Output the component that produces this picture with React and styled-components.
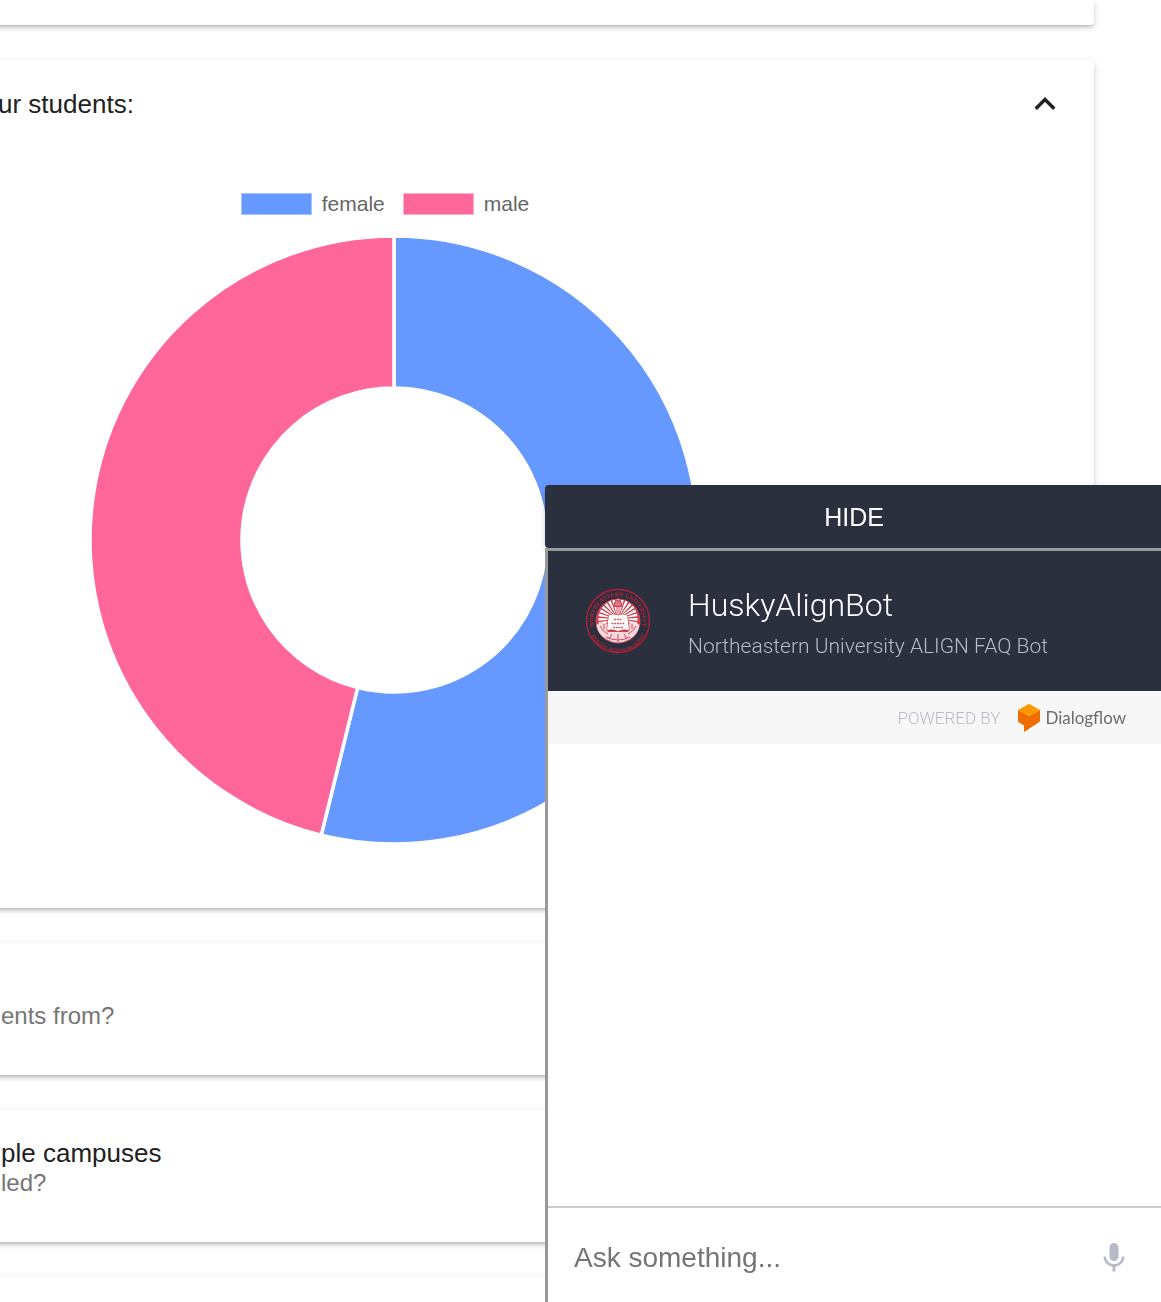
import React from "react";
import styled, { createGlobalStyle } from "styled-components";

const GlobalStyle = createGlobalStyle`
  *, *::before, *::after { box-sizing: border-box; }
  body {
    margin: 0;
    background: #fff;
    font-family: "Liberation Sans", Arial, sans-serif;
  }
`;

const elevation = `
  0 3px 3px -2px rgba(0, 0, 0, 0.12),
  0 3px 4px 0 rgba(0, 0, 0, 0.12),
  0 2px 9px 0 rgba(0, 0, 0, 0.1)
`;

const Page = styled.main`
  height: 100vh;
  overflow: hidden;
`;

const CardList = styled.div`
  display: flex;
  flex-direction: column;
  gap: 35px;
  margin: 0 67px 0 -306px;
`;

const Card = styled.section`
  flex: none;
  min-height: ${(p) => p.$height || 132}px;
  background: #fff;
  border-radius: 4px;
  box-shadow: ${elevation};
`;

const CardHeader = styled.header`
  display: flex;
  align-items: center;
  justify-content: space-between;
  height: 88px;
  padding: 0 28px 0 304px;
`;

const CardText = styled.div`
  padding: 29px 28px 45px 307px;
`;

const Title = styled.h2`
  margin: 0;
  min-height: 29px;
  font-size: 26px;
  font-weight: 400;
  line-height: 28px;
  color: #212121;
`;

const Subtitle = styled.p`
  margin: 0;
  font-size: 24px;
  line-height: 29px;
  color: #757575;
`;

const IconButton = styled.button`
  display: flex;
  padding: 0;
  border: 0;
  background: none;
  color: ${(p) => p.$color};
  cursor: pointer;

  svg {
    width: ${(p) => p.$size}px;
    height: ${(p) => p.$size}px;
    fill: currentColor;
  }
`;

const Chart = styled.figure`
  display: flex;
  flex-direction: column;
  align-items: center;
  gap: 19px;
  margin: 0;
  padding: 45px 0 62px;

  svg {
    display: block;
    width: 612px;
    height: 612px;
  }
`;

const Legend = styled.ul`
  display: flex;
  margin: 0;
  padding: 0;
  list-style: none;
`;

const LegendItem = styled.li`
  display: flex;
  align-items: center;
  gap: 10px;
  padding-right: 18px;
  font-size: 21px;
  line-height: 22px;
  color: #666;

  &::before {
    content: "";
    width: 71px;
    height: 22px;
    border: 1px solid ${(p) => p.$edge};
    background: ${(p) => p.$color};
  }
`;

const Widget = styled.aside`
  position: fixed;
  right: 0;
  bottom: 0;
  display: flex;
  flex-direction: column;
  width: 616px;
  height: 817px;
`;

const HideButton = styled.button`
  flex: none;
  height: 63px;
  padding: 2px 0 0 2px;
  border: 0;
  border-radius: 4px 0 0 4px;
  background: #2b303f;
  box-shadow: ${elevation};
  font-family: "Liberation Sans", Arial, sans-serif;
  font-size: 25px;
  font-weight: 500;
  color: #fff;
  cursor: pointer;
`;

const ChatFrame = styled.div`
  position: relative;
  flex: 1;
  display: flex;
  flex-direction: column;
  border: solid #999;
  border-width: 3px 0 0 3px;
  background: #fff;
  font-family: Roboto, sans-serif;
`;

const ChatHeader = styled.header`
  display: flex;
  align-items: center;
  gap: 38px;
  height: 140px;
  padding-left: 38px;
  background: #2b303f;

  svg {
    flex: none;
    width: 64px;
    height: 66px;
  }
`;

const BotInfo = styled.div`
  padding-top: 6px;
`;

const BotName = styled.h1`
  margin: 0;
  font-size: 32px;
  font-weight: 300;
  line-height: 44px;
  color: #fff;
`;

const BotDescription = styled.p`
  margin: 0;
  font-size: 21px;
  font-weight: 300;
  line-height: 38px;
  color: #b7bbc8;
`;

const PoweredBy = styled.div`
  display: flex;
  align-items: center;
  justify-content: flex-end;
  gap: 18px;
  height: 53px;
  padding-right: 35px;
  background: #f7f7f7;
  font-size: 17px;
  font-weight: 300;
  color: #b7bbc8;
`;

const Brand = styled.a`
  display: flex;
  align-items: center;
  gap: 5px;
  font-family: Lato, sans-serif;
  font-size: 17px;
  font-weight: 400;
  line-height: 28px;
  color: #6b6b6b;
  text-decoration: none;

  svg {
    width: 22px;
    height: 28px;
  }
`;

const Messages = styled.div`
  flex: 1;
`;

const AskForm = styled.form`
  display: flex;
  align-items: center;
  height: 96px;
  padding: 5px 29px 0 26px;
  border-top: 2px solid #ccc;
`;

const AskInput = styled.input`
  flex: 1;
  min-width: 0;
  height: 60px;
  padding: 0;
  border: 0;
  outline: 0;
  background: transparent;
  font-family: "Liberation Sans", Arial, sans-serif;
  font-size: 28px;
  color: #2b303f;

  &::placeholder {
    color: #757575;
    opacity: 1;
  }
`;

const SLICES = [
  { label: "female", value: 7, color: "#6699ff", edge: "#a8c4ff" },
  { label: "male", value: 6, color: "#ff6699", edge: "#ffb0c9" },
];

function Doughnut({ slices }) {
  const c = 306;
  const outer = 304;
  const inner = 152;
  const total = slices.reduce((sum, s) => sum + s.value, 0);
  const at = (r, t) => {
    const a = t * 2 * Math.PI;
    return `${c + r * Math.sin(a)} ${c - r * Math.cos(a)}`;
  };
  let start = 0;
  return (
    <svg viewBox="0 0 612 612" role="img" aria-label="Students by gender">
      {slices.map((s) => {
        const from = start;
        const to = start + s.value / total;
        start = to;
        const large = to - from > 0.5 ? 1 : 0;
        const d = `M${at(outer, from)}A${outer} ${outer} 0 ${large} 1 ${at(outer, to)}L${at(inner, to)}A${inner} ${inner} 0 ${large} 0 ${at(inner, from)}Z`;
        return <path key={s.label} d={d} fill={s.color} stroke="#fff" strokeWidth="3.5" />;
      })}
    </svg>
  );
}

const rays = Array.from({ length: 17 }, (_, i) => -104 + i * 13);

function Seal() {
  return (
    <svg viewBox="0 0 64 66" aria-hidden="true">
      <defs>
        <path id="seal-top" d="M10.500 45A24.600 24.600 0 1 1 53.500 45" />
        <path id="seal-bottom" d="M3.500 42A29.500 29.500 0 0 0 60.500 42" />
      </defs>
      <circle cx="32" cy="33" r="31.500" fill="none" stroke="#b81f36" strokeWidth="1.300" />
      <circle cx="32" cy="33" r="22.500" fill="#cf4353" />
      <g fill="#c4203a" fontFamily="Liberation Serif, serif" fontSize="5.900" fontWeight="700">
        <text><textPath href="#seal-top" startOffset="50%" textAnchor="middle">NORTHEASTERN UNIVERSITY</textPath></text>
        <text fontSize="4.800"><textPath href="#seal-bottom" startOffset="50%" textAnchor="middle">BOSTON, MASSACHUSETTS</textPath></text>
      </g>
      <g fill="#fff">
        {rays.map((a) => (
          <path key={a} d="M31.700 25L30.600 11.500h2.800L32.300 25z" transform={`rotate(${a} 32 31)`} />
        ))}
      </g>
      <path d="M29.500 17h5l-1 10h-3z" fill="#e9a3ab" />
      <path d="M28.500 14.500q3.500-4 7 0v4h-7z" fill="#dd7783" stroke="#c4203a" strokeWidth=".8" />
      <path d="M10.500 37q5-5 11-1v8h21v-8q6-4 11 1-1 9-9.500 14-12 7-24 0-8.500-5-9.500-14z" fill="#f6d9dc" />
      <path d="M14 38q3 6 8 8M50 38q-3 6-8 8M18 36v5M46 36v5M20 49q12 6 24 0M26 46l-3 5M38 46l3 5M32 46v8" stroke="#d3485a" strokeWidth="1" fill="none" />
      <path d="M22.500 27q5-2 9.500 0 4.500-2 9.500 0l2 15.500q-6.500-2-11.500 1-5-3-11.500-1z" fill="#fff" stroke="#d3283c" strokeWidth=".6" />
      <path d="M28 31.500h8M25.500 35.500h13M27 39.500h10" stroke="#c9606e" strokeWidth="1.400" strokeDasharray="2 .7" />
    </svg>
  );
}

function DialogflowMark() {
  return (
    <svg viewBox="0 0 22 28" aria-hidden="true">
      <path d="M0 6l11 6 11-6v10.500q0 1.200-1 1.800L6.500 27.700q-.5.200-.5-.4V21.500L1 18.500q-1-.6-1-1.800z" fill="#ef6c00" />
      <path d="M0 6L10.200.3q.8-.4 1.600 0L22 6l-11 6.300z" fill="#ff9800" />
    </svg>
  );
}

export default function App() {
  return (
    <>
      <GlobalStyle />
      <Page>
        <CardList>
          <Card $height={25} />
          <Card $height={848}>
            <CardHeader>
              <Title>ur students:</Title>
              <IconButton type="button" aria-label="Collapse" $size={42} $color="#212121">
                <svg viewBox="0 0 24 24"><path d="M12 8l-6 6 1.410 1.410L12 10.830l4.590 4.580L18 14z" /></svg>
              </IconButton>
            </CardHeader>
            <Chart>
              <Legend>
                {SLICES.map((s) => (
                  <LegendItem key={s.label} $color={s.color} $edge={s.edge}>{s.label}</LegendItem>
                ))}
              </Legend>
              <Doughnut slices={SLICES} />
            </Chart>
          </Card>
          <Card>
            <CardText>
              <Title as="div" />
              <Subtitle>ents from?</Subtitle>
            </CardText>
          </Card>
          <Card>
            <CardText>
              <Title>ple campuses</Title>
              <Subtitle>led?</Subtitle>
            </CardText>
          </Card>
          <Card />
        </CardList>
      </Page>
      <Widget>
        <HideButton type="button">HIDE</HideButton>
        <ChatFrame>
          <ChatHeader>
            <Seal />
            <BotInfo>
              <BotName>HuskyAlignBot</BotName>
              <BotDescription>Northeastern University ALIGN FAQ Bot</BotDescription>
            </BotInfo>
          </ChatHeader>
          <PoweredBy>
            <span>POWERED BY</span>
            <Brand href="#dialogflow">
              <DialogflowMark />
              Dialogflow
            </Brand>
          </PoweredBy>
          <Messages />
          <AskForm onSubmit={(e) => e.preventDefault()}>
            <AskInput type="text" placeholder="Ask something..." aria-label="Ask something" />
            <IconButton type="button" aria-label="Speak" $size={36} $color="#b7bbc8">
              <svg viewBox="0 0 24 24"><path d="M12 14c1.660 0 2.990-1.340 2.990-3L15 5c0-1.660-1.340-3-3-3S9 3.340 9 5v6c0 1.660 1.340 3 3 3zm5.300-3c0 3-2.540 5.100-5.300 5.100S6.700 14 6.700 11H5c0 3.410 2.720 6.230 6 6.720V21h2v-3.280c3.280-.48 6-3.300 6-6.720h-1.700z" /></svg>
            </IconButton>
          </AskForm>
        </ChatFrame>
      </Widget>
    </>
  );
}
